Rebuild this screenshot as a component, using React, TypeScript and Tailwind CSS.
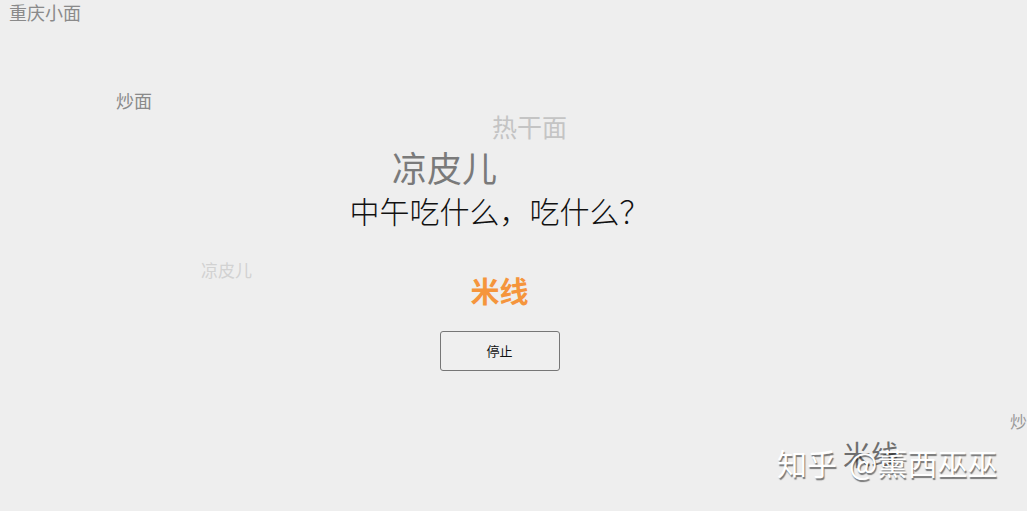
import type { ReactElement } from "react";

const FONT = "font-['Microsoft_YaHei','Noto_Sans_CJK_SC',sans-serif]";

interface FloatWord {
  text: string;
  className: string;
}

// words flying around the canvas: their place is the content
const floatingWords: FloatWord[] = [
  { text: "重庆小面", className: "left-[9px] top-[3px] text-[18px] text-[#8a8a8a]" },
  { text: "炒面", className: "left-[116px] top-[91px] text-[18px] text-[#8a8a8a]" },
  { text: "热干面", className: "left-[492px] top-[114px] text-[25px] text-[#c4c4c4]" },
  { text: "凉皮儿", className: "left-[392px] top-[149px] text-[35px] text-[#7a7a7a]" },
  { text: "凉皮儿", className: "left-[201px] top-[261px] text-[17px] text-[#d2d2d2]" },
  { text: "炒", className: "left-[1010px] top-[412px] text-[17px] text-[#9a9a9a]" },
  { text: "米线", className: "left-[843px] top-[440px] text-[28px] text-[#6e6e6e]" },
];

export default function App(): ReactElement {
  return (
    <div className={`relative h-[511px] w-full overflow-hidden bg-[#eeeeee] ${FONT}`}>
      {floatingWords.map((w, i) => (
        <span key={i} className={`absolute whitespace-nowrap leading-none ${w.className}`}>
          {w.text}
        </span>
      ))}

      <div className="relative flex w-[999px] flex-col items-center pt-[191px]">
        <h1 className="text-[30px] font-light leading-[38px] text-[#111]">中午吃什么，吃什么？</h1>
        <div className="mt-[43px] text-[29px] font-bold leading-[36px] text-[#f5953c]">米线</div>
        <button className="mt-[23px] h-[40px] w-[120px] rounded-[3px] border border-[#767676] bg-[#efefef] text-[13px] text-[#111]">
          停止
        </button>
      </div>

      {/* watermark */}
      <div className="absolute left-[777px] top-[447px] whitespace-nowrap text-[30px] leading-none text-white [text-shadow:1px_2px_1px_rgba(0,0,0,0.5)]">
        知乎<span className="inline-block w-[12px]" />@薰西巫巫
      </div>
    </div>
  );
}
